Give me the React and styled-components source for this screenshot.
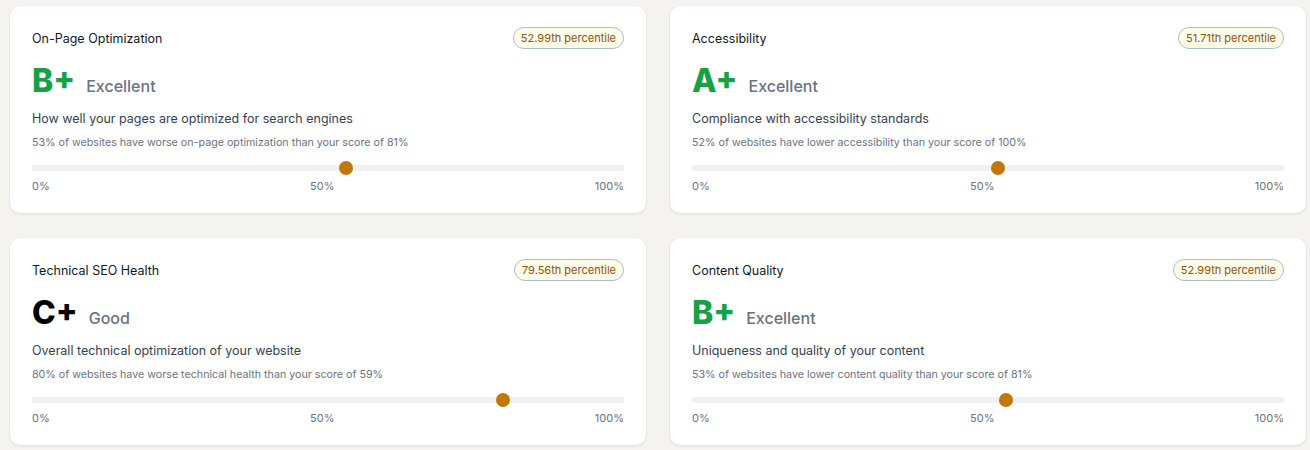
import React from "react";
import styled, { createGlobalStyle } from "styled-components";

const Global = createGlobalStyle`
  html, body { margin: 0; padding: 0; background: #f4f3f0; }
  body { font-family: Inter, "Noto Sans", sans-serif; -webkit-font-smoothing: antialiased; }
`;

const Page = styled.div`
  padding: 6px 4px 6px 10px;
  display: grid;
  grid-template-columns: 636px 636px;
  column-gap: 24px;
  row-gap: 25px;
`;

const Card = styled.div`
  background: #fff;
  border-radius: 10px;
  box-shadow: 0 1px 3px rgba(0, 0, 0, 0.08), 0 0 0 1px rgba(0, 0, 0, 0.02);
  padding: 21px 22px 20px;
  display: flex;
  flex-direction: column;
`;

const Header = styled.div`
  display: flex;
  align-items: center;
  justify-content: space-between;
  height: 22px;
`;

const Title = styled.div`
  font-size: 12.5px;
  font-weight: 400;
  color: #111827;
`;

const Badge = styled.span`
  font-size: 11px;
  line-height: 20px;
  padding: 0 7px;
  border-radius: 999px;
  border: 1px solid #a9c2cf;
  background: #fefbe8;
  color: #8a5412;
`;

const GradeRow = styled.div`
  display: flex;
  align-items: baseline;
  gap: 11px;
  margin-top: 15px;
`;

const Grade = styled.span`
  font-size: 32px;
  line-height: 34px;
  font-weight: 800;
  color: ${(p) => (p.$tone === "dark" ? "#000" : "#18a048")};
`;

const Label = styled.span`
  font-size: 16px;
  font-weight: 500;
  color: #6b7280;
`;

const Desc = styled.div`
  font-size: 12.5px;
  line-height: 20px;
  color: #374151;
  margin-top: 11px;
`;

const Sub = styled.div`
  font-size: 10.7px;
  line-height: 16px;
  color: #6b7280;
  margin-top: 6px;
`;

const Track = styled.div`
  position: relative;
  height: 6px;
  border-radius: 3px;
  background: #f1f1f3;
  margin-top: 14px;
`;

const Dot = styled.div`
  position: absolute;
  top: 50%;
  width: 14px;
  height: 14px;
  border-radius: 50%;
  background: #c27806;
  transform: translate(-50%, -50%);
`;

const Scale = styled.div`
  display: flex;
  justify-content: space-between;
  font-size: 11px;
  line-height: 14px;
  color: #6b7280;
  margin-top: 8px;
`;

const data = [
  {
    title: "On-Page Optimization",
    pct: 52.99,
    grade: "B+",
    label: "Excellent",
    desc: "How well your pages are optimized for search engines",
    sub: "53% of websites have worse on-page optimization than your score of 81%",
  },
  {
    title: "Accessibility",
    pct: 51.71,
    grade: "A+",
    label: "Excellent",
    desc: "Compliance with accessibility standards",
    sub: "52% of websites have lower accessibility than your score of 100%",
  },
  {
    title: "Technical SEO Health",
    pct: 79.56,
    grade: "C+",
    tone: "dark",
    label: "Good",
    desc: "Overall technical optimization of your website",
    sub: "80% of websites have worse technical health than your score of 59%",
  },
  {
    title: "Content Quality",
    pct: 52.99,
    grade: "B+",
    label: "Excellent",
    desc: "Uniqueness and quality of your content",
    sub: "53% of websites have lower content quality than your score of 81%",
  },
];

export default function App() {
  return (
    <>
      <Global />
      <Page>
        {data.map((d) => (
          <Card key={d.title}>
            <Header>
              <Title>{d.title}</Title>
              <Badge>{d.pct.toFixed(2)}th percentile</Badge>
            </Header>
            <GradeRow>
              <Grade $tone={d.tone}>{d.grade}</Grade>
              <Label>{d.label}</Label>
            </GradeRow>
            <Desc>{d.desc}</Desc>
            <Sub>{d.sub}</Sub>
            <Track>
              <Dot style={{ left: `${d.pct}%` }} />
            </Track>
            <Scale>
              <span>0%</span>
              <span>50%</span>
              <span>100%</span>
            </Scale>
          </Card>
        ))}
      </Page>
    </>
  );
}
